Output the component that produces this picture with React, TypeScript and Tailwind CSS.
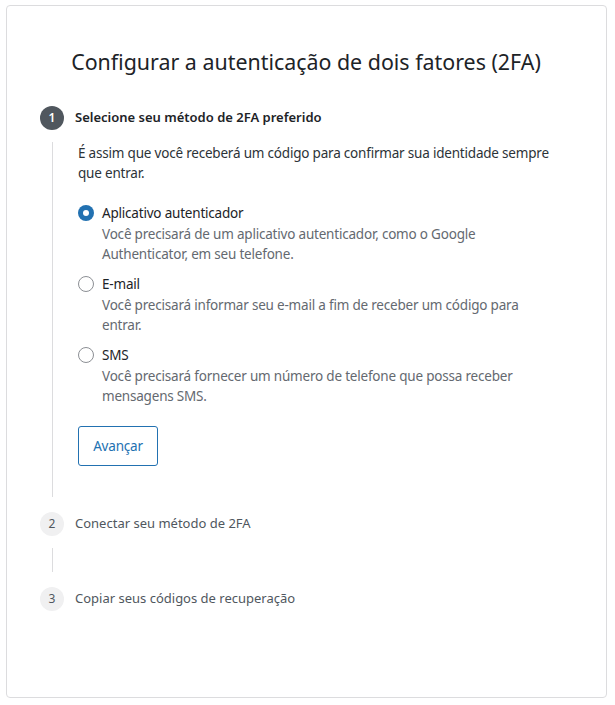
const font = { fontFamily: '"Noto Sans", "Open Sans", sans-serif' };

type Step = { num: number; label: string; active: boolean };

const steps: Step[] = [
	{ num: 1, label: "Selecione seu método de 2FA preferido", active: true },
	{ num: 2, label: "Conectar seu método de 2FA", active: false },
	{ num: 3, label: "Copiar seus códigos de recuperação", active: false },
];

const options = [
	{
		id: "app",
		title: "Aplicativo autenticador",
		desc: "Você precisará de um aplicativo autenticador, como o Google Authenticator, em seu telefone.",
		checked: true,
	},
	{
		id: "email",
		title: "E-mail",
		desc: "Você precisará informar seu e-mail a fim de receber um código para entrar.",
		checked: false,
	},
	{
		id: "sms",
		title: "SMS",
		desc: "Você precisará fornecer um número de telefone que possa receber mensagens SMS.",
		checked: false,
	},
];

const Radio = ({ checked }: { checked: boolean }) =>
	checked ? (
		<span className="mt-[2px] w-4 h-4 shrink-0 rounded-full bg-[#2271b1] flex items-center justify-center">
			<span className="w-[6px] h-[6px] rounded-full bg-white" />
		</span>
	) : (
		<span className="mt-[2px] w-4 h-4 shrink-0 rounded-full border border-[#8c8f94] bg-white" />
	);

const MethodPicker = () => (
	<div className="flex flex-col text-[13.5px] tracking-[-0.2px]">
		<p className="leading-5 text-[#2c3338]">
			É assim que você receberá um código para confirmar sua identidade sempre que entrar.
		</p>
		<div className="flex flex-col gap-[10px] mt-5">
			{options.map((o) => (
				<label key={o.id} className="flex flex-row gap-2 items-start">
					<Radio checked={o.checked} />
					<div className="flex flex-col">
						<span className="leading-5 text-[#1d2327]">{o.title}</span>
						<span className="mt-px leading-5 text-[#646970]">{o.desc}</span>
					</div>
				</label>
			))}
		</div>
		<button className="mt-5 w-20 h-10 rounded-[3px] border border-[#2271b1] text-[#2271b1] bg-white">
			Avançar
		</button>
	</div>
);

export default function App() {
	return (
		<div className="pt-[5px] pl-[6px] bg-white" style={font}>
			<div className="w-[601px] h-[693px] border border-[#dcdcde] rounded-[4px] pl-[33px] pr-[48px]">
				<h1 className="pt-[38px] text-center text-[21.4px] leading-[36px] text-[#1d2327] pl-[14px]">
					Configurar a autenticação de dois fatores (2FA)
				</h1>
				<div className="flex flex-col mt-[26px]">
					{steps.map((s, i) => (
						<div key={s.num} className="flex flex-col">
							<div className="flex flex-row items-center gap-[11px] h-6">
								<span
									className={
										s.active
											? "w-6 h-6 rounded-full bg-[#50575e] text-white text-[12px] font-semibold flex items-center justify-center"
											: "w-6 h-6 rounded-full bg-[#f0f0f1] text-[#50575e] text-[12px] flex items-center justify-center"
									}
								>
									{s.num}
								</span>
								<span
									className={
										s.active
											? "text-[13px] font-semibold text-[#1d2327]"
											: "text-[13px] text-[#50575e]"
									}
								>
									{s.label}
								</span>
							</div>
							{i < steps.length - 1 && (
								<div className="flex flex-row mt-3 mb-[15px]">
									<div className="w-6 flex justify-center shrink-0">
										<div className="w-px h-full bg-[#dcdcde]" />
									</div>
									<div className={s.active ? "pl-[14px] pt-px pb-[31px]" : "h-6"}>
										{s.active && <MethodPicker />}
									</div>
								</div>
							)}
						</div>
					))}
				</div>
			</div>
		</div>
	);
}
